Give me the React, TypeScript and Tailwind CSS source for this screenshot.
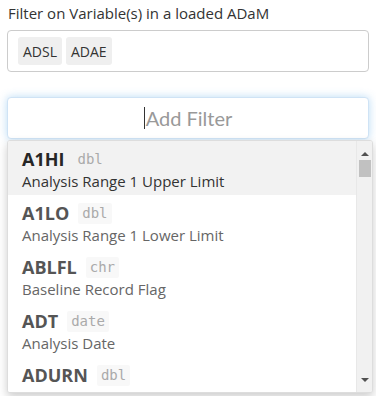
import React from 'react';

const items = [
  { name: 'A1HI', type: 'dbl', label: 'Analysis Range 1 Upper Limit' },
  { name: 'A1LO', type: 'dbl', label: 'Analysis Range 1 Lower Limit' },
  { name: 'ABLFL', type: 'chr', label: 'Baseline Record Flag' },
  { name: 'ADT', type: 'date', label: 'Analysis Date' },
  { name: 'ADURN', type: 'dbl', label: '' },
];

export default function App() {
  return (
    <div className="relative w-[376px] h-[396px] overflow-hidden bg-white px-[7px] font-['Open_Sans',sans-serif] text-[#333]">
      <p className="pt-[3px] pl-[1px] text-[15px] leading-[21px]">Filter on Variable(s) in a loaded ADaM</p>

      <div className="mt-[6px] h-[42px] rounded-[4px] border border-[#ccc] flex items-center gap-[4px] px-[10px]">
        <span className="h-[28px] px-[5px] flex items-center rounded-[3px] bg-[#efefef] text-[14px]">ADSL</span>
        <span className="h-[28px] px-[5px] flex items-center rounded-[3px] bg-[#efefef] text-[14px]">ADAE</span>
      </div>

      <div className="relative mt-[25px]">
        <div className="h-[42px] rounded-[4px] border border-[#cfe3f5] bg-white shadow-[0_0_8px_rgba(102,175,233,0.45)] flex items-center justify-center">
          <span className="w-px h-[22px] bg-[#333] mr-[1px]" />
          <span className="text-[20px] text-[#999] font-['Lato',sans-serif]">Add Filter</span>
        </div>

        <div className="absolute left-0 top-[43px] w-[366px] h-[253px] border border-[#ddd] rounded-[3px] bg-white shadow-[0_4px_10px_rgba(0,0,0,0.2)] flex overflow-hidden">
          <ul className="flex-1">
            {items.map((it, i) => (
              <li key={it.name} className={`h-[54px] pl-[14px] pt-[6px] ${i === 0 ? 'bg-[#f2f2f2]' : 'bg-white'}`}>
                <div className="flex items-center gap-[9px] h-[24px]">
                  <span className={`text-[18px] font-bold ${i === 0 ? 'text-[#262626]' : 'text-[#555]'}`}>{it.name}</span>
                  <span className={`font-['DejaVu_Sans_Mono',monospace] text-[14px] leading-[21px] px-[4px] rounded-[2px] text-[#aaa] ${i === 0 ? 'bg-[#f2f2f2]' : 'bg-[#f8f8f8]'}`}>{it.type}</span>
                </div>
                {it.label && (
                  <p className={`text-[15px] leading-[21px] ${i === 0 ? 'text-[#333]' : 'text-[#666]'}`}>{it.label}</p>
                )}
              </li>
            ))}
          </ul>
          <div className="w-[16px] bg-[#f1f1f1] border-l border-[#e8e8e8] flex flex-col items-center">
            <svg width="10" height="6" viewBox="0 0 10 6" className="mt-[10px]"><path d="M1 5h8L5 1z" fill="#505050" /></svg>
            <div className="mt-[3px] w-[12px] h-[17px] bg-[#c1c1c1]" />
            <div className="flex-1" />
            <svg width="10" height="6" viewBox="0 0 10 6" className="mb-[9px]"><path d="M1 1h8L5 5z" fill="#505050" /></svg>
          </div>
        </div>
      </div>
    </div>
  );
}
